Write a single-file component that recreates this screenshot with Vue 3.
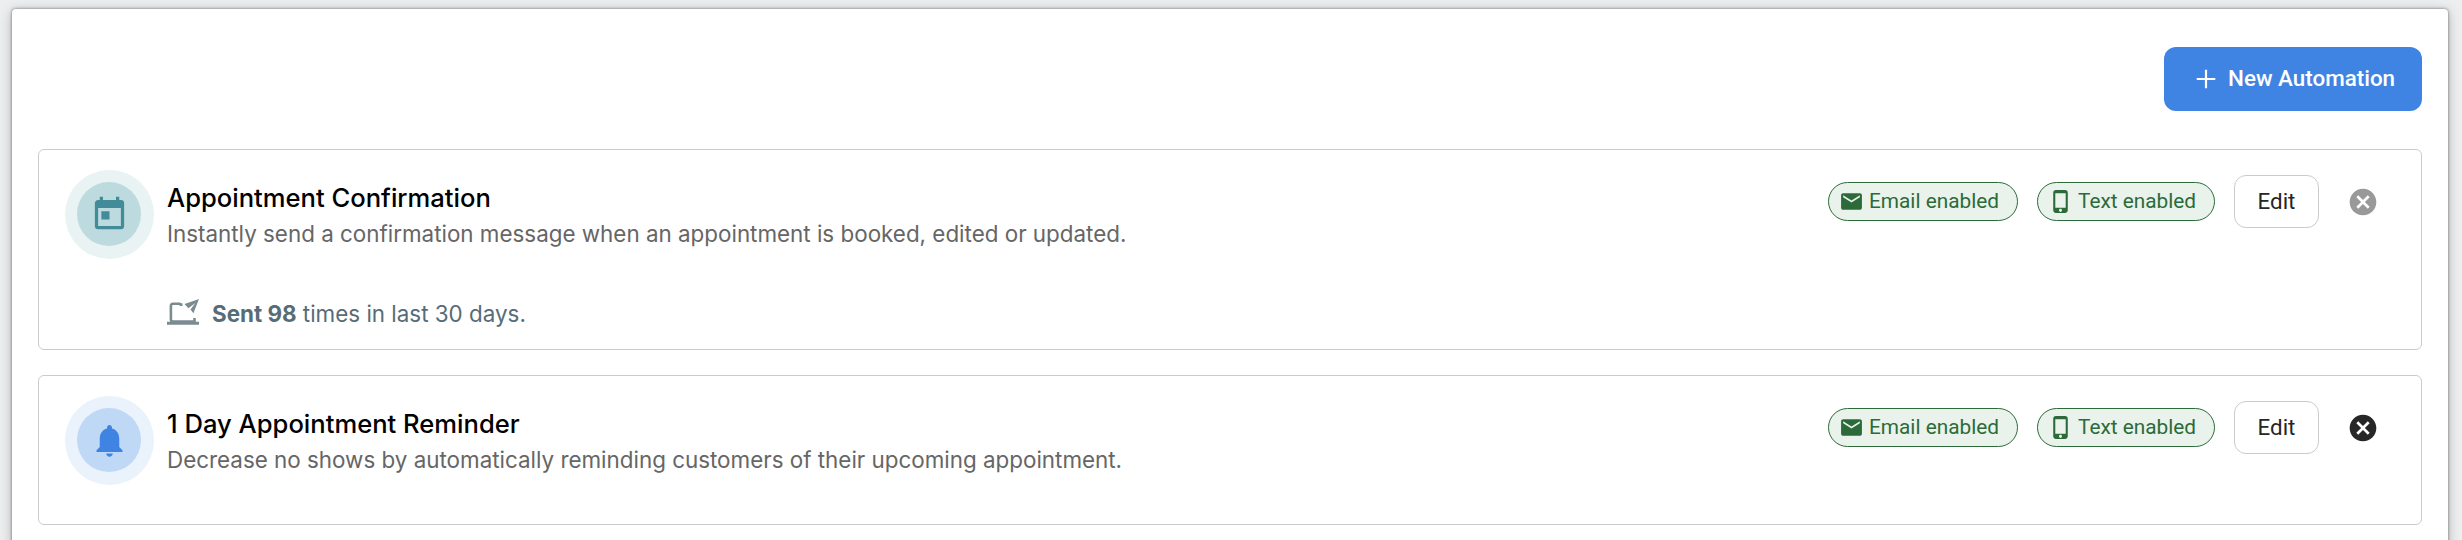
<template>
  <div class="page">
    <main class="panel">
      <div class="toolbar">
        <button class="btn-new">
          <svg class="plus" viewBox="0 0 20 20"><path d="M10 .7v18.6M.7 10h18.6" /></svg>
          <span>New Automation</span>
        </button>
      </div>

      <section
        v-for="item in automations"
        :key="item.id"
        class="card"
        :class="{ 'has-stats': item.sent }"
      >
        <div class="badge" :class="item.tone">
          <div class="badge-inner">
            <svg viewBox="0 0 24 24"><path :d="icons[item.icon]" /></svg>
          </div>
        </div>

        <div class="info">
          <h2 class="title">{{ item.title }}</h2>
          <p class="description">{{ item.description }}</p>
          <div v-if="item.sent" class="stats">
            <svg class="laptop" viewBox="0 0 32 27">
              <path class="line" d="M15.5 5.6H13.5L12.5 4.800H6Q3.900 4.800 3.900 7V20.500Q3.900 22.500 6 22.500H27.500V19" />
              <path d="M0 22.700h32v3H0zM32 0 17.500 5l3.900 4.300 7-5.300-4.900 6.500 2.900 3.800z" />
            </svg>
            <span><b>Sent {{ item.sent }}</b> times in last 30 days.</span>
          </div>
        </div>

        <div class="actions">
          <span class="chip email">
            <svg viewBox="0 0 24 24"><path :d="icons.email" /></svg>
            <span>Email enabled</span>
          </span>
          <span class="chip text">
            <svg viewBox="0 0 24 24"><path :d="icons.phone" /></svg>
            <span>Text enabled</span>
          </span>
          <button class="btn-edit">Edit</button>
          <button class="btn-remove" :disabled="item.locked" aria-label="Remove">
            <svg viewBox="0 0 24 24"><path :d="icons.cancel" /></svg>
          </button>
        </div>
      </section>
    </main>
  </div>
</template>

<script setup>
const icons = {
  calendar: 'M7,10H12V15H7M19,19H5V8H19M19,3H18V1H16V3H8V1H6V3H5C3.89,3 3,3.9 3,5V19A2,2 0 0,0 5,21H19A2,2 0 0,0 21,19V5A2,2 0 0,0 19,3Z',
  bell: 'M12 22c1.1 0 2-.9 2-2h-4c0 1.1.89 2 2 2zm6-6v-5c0-3.07-1.64-5.64-4.5-6.32V4c0-.83-.67-1.5-1.5-1.5s-1.5.67-1.5 1.5v.68C7.63 5.36 6 7.92 6 11v5l-2 2v1h16v-1l-2-2z',
  email: 'M20 4H4c-1.1 0-1.99.9-1.99 2L2 18c0 1.1.9 2 2 2h16c1.1 0 2-.9 2-2V6c0-1.1-.9-2-2-2zm0 4l-8 5-8-5V6l8 5 8-5v2z',
  phone: 'M16.5 1h-9C6.1 1 5 2.1 5 3.5v17C5 21.9 6.1 23 7.5 23h9c1.4 0 2.5-1.1 2.5-2.5v-17C19 2.1 17.9 1 16.5 1zM12 22c-.83 0-1.5-.67-1.5-1.5S11.17 19 12 19s1.5.67 1.5 1.5S12.83 22 12 22zm5-4H7V4h10v14z',
  cancel: 'M12 2C6.47 2 2 6.47 2 12s4.47 10 10 10 10-4.47 10-10S17.53 2 12 2zm5 13.59L15.59 17 12 13.41 8.41 17 7 15.59 10.59 12 7 8.41 8.41 7 12 10.59 15.59 7 17 8.41 13.41 12 17 15.59z',
}

const automations = [
  {
    id: 1,
    title: 'Appointment Confirmation',
    description: 'Instantly send a confirmation message when an appointment is booked, edited or updated.',
    icon: 'calendar',
    tone: 'teal',
    sent: 98,
    locked: true,
  },
  {
    id: 2,
    title: '1 Day Appointment Reminder',
    description: 'Decrease no shows by automatically reminding customers of their upcoming appointment.',
    icon: 'bell',
    tone: 'blue',
    sent: 0,
    locked: false,
  },
]
</script>

<style>
body {
  background: #edeef0;
  overflow: hidden;
}
</style>

<style scoped>
* {
  box-sizing: border-box;
}

svg {
  display: block;
  flex: none;
  fill: currentColor;
}

button {
  margin: 0;
  padding: 0;
  font-family: Roboto, sans-serif;
}

.page {
  height: 540px;
  padding: 9px 14px 0 12px;
  overflow: hidden;
  font-family: Inter, sans-serif;
}

.panel {
  height: 600px;
  padding: 38px 26px 0;
  border-radius: 4px;
  background: #fff;
  box-shadow: 0 0 3px rgba(0, 0, 0, 0.5), 0 2px 12px rgba(0, 0, 0, 0.25);
}

.toolbar {
  display: flex;
  justify-content: flex-end;
  margin-bottom: 38px;
}

.btn-new {
  display: flex;
  align-items: center;
  gap: 12px;
  width: 258px;
  height: 64px;
  padding-left: 32px;
  border: 0;
  border-radius: 12px;
  background: #3f84e2;
  color: #fff;
  font-size: 22.4px;
  font-weight: 500;
  white-space: nowrap;
}

.btn-new span {
  padding-bottom: 2px;
}

.plus {
  width: 20px;
  height: 20px;
  stroke: #fff;
  stroke-width: 2.2;
}

.card {
  display: flex;
  align-items: flex-start;
  height: 150px;
  margin-bottom: 25px;
  padding: 20px 42px 0 26px;
  border: 1px solid #cbcbcb;
  border-radius: 6px;
}

.card.has-stats {
  height: 201px;
}

.badge {
  width: 89px;
  height: 89px;
  padding: 12px;
  border-radius: 50%;
}

.badge-inner {
  display: flex;
  align-items: center;
  justify-content: center;
  width: 64px;
  height: 64px;
  border-radius: 50%;
}

.badge svg {
  width: 39px;
  height: 39px;
}

.teal {
  background: #e9f3f4;
  color: #418c98;
}

.teal .badge-inner {
  background: #bddbde;
}

.blue {
  background: #eaf2fc;
  color: #3f84e2;
}

.blue .badge-inner {
  background: #bfd8f6;
}

.info {
  flex: 1;
  padding: 10px 0 0 13px;
}

.title {
  margin: 0;
  color: #000;
  font-size: 25.6px;
  font-weight: 500;
  line-height: 36px;
}

.description {
  margin: 0;
  color: #666;
  font-size: 22.4px;
  line-height: 36px;
}

.stats {
  display: flex;
  align-items: center;
  gap: 13px;
  margin-top: 44px;
  color: #566c77;
  font-size: 22.4px;
  line-height: 36px;
}

.stats b {
  font-weight: 700;
}

.laptop {
  width: 32px;
  height: 27px;
  margin-bottom: 3px;
  color: #7b8b92;
}

.laptop .line {
  fill: none;
  stroke: currentColor;
  stroke-width: 2.6;
}

.actions {
  display: flex;
  align-items: center;
  height: 53px;
  margin-top: 5px;
}

.chip {
  display: flex;
  align-items: center;
  height: 39px;
  margin-right: 19px;
  border: 1px solid #2c6b39;
  border-radius: 20px;
  background: #e9f3ec;
  color: #2c6b39;
  font-family: Roboto, sans-serif;
  font-size: 20.8px;
  white-space: nowrap;
}

.chip.email {
  width: 190px;
  padding-left: 10px;
}

.chip.text {
  width: 178px;
  padding-left: 10px;
}

.chip svg {
  width: 25px;
  height: 25px;
  margin-right: 5px;
}

.chip span {
  padding-bottom: 2px;
}

.btn-edit {
  width: 85px;
  height: 53px;
  padding-bottom: 2px;
  border: 1px solid #cbcbcb;
  border-radius: 12px;
  background: #fff;
  color: #262626;
  font-size: 22.4px;
}

.btn-remove {
  margin-left: 28px;
  border: 0;
  background: none;
  color: #272727;
}

.btn-remove:disabled {
  color: #999;
}

.btn-remove svg {
  width: 32px;
  height: 32px;
}
</style>
